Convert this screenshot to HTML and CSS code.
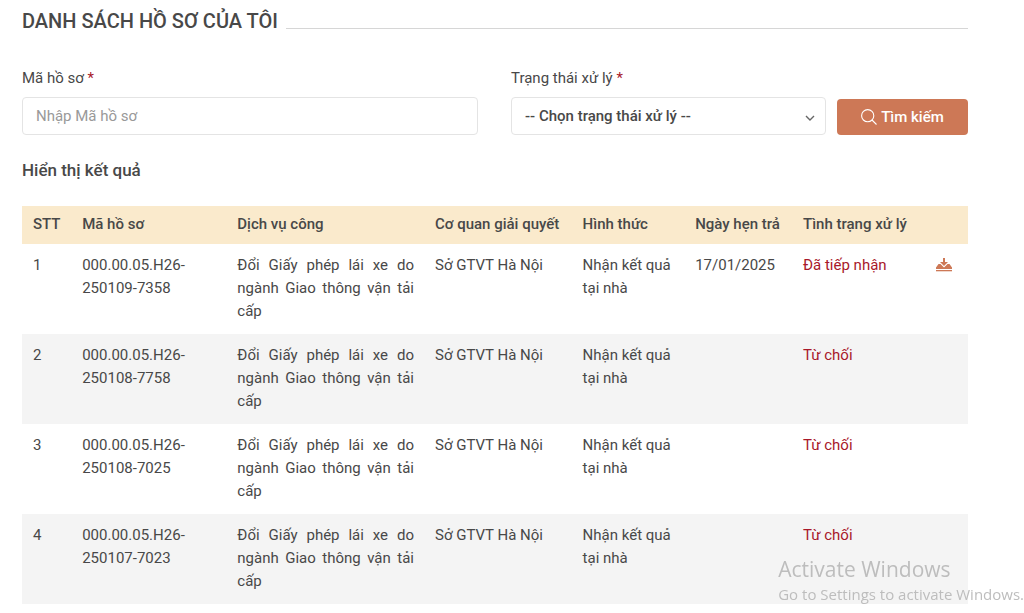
FILE: index.html
```html
<!DOCTYPE html>
<html lang="vi">
<head>
<meta charset="utf-8">
<meta name="viewport" content="width=device-width, initial-scale=1">
<title>Danh sách hồ sơ của tôi</title>
<link rel="stylesheet" href="styles.css">
</head>
<body>
<main class="page">
  <header class="page-head">
    <h1 class="page-title">DANH SÁCH HỒ SƠ CỦA TÔI</h1>
    <span class="page-rule"></span>
  </header>

  <form class="filters">
    <div class="field">
      <label class="field-label" for="code">Mã hồ sơ <span class="required">*</span></label>
      <input class="control" id="code" type="text" placeholder="Nhập Mã hồ sơ">
    </div>
    <div class="field">
      <label class="field-label" for="status">Trạng thái xử lý <span class="required">*</span></label>
      <div class="select-wrap">
        <select class="control control-select" id="status">
          <option>-- Chọn trạng thái xử lý --</option>
        </select>
        <svg class="chevron" viewBox="0 0 10 6" aria-hidden="true"><path d="M1 1l4 4 4-4"/></svg>
      </div>
    </div>
    <button class="search" type="button">
      <svg class="search-icon" viewBox="0 0 16 16" aria-hidden="true"><circle cx="6.7" cy="6.7" r="6.1"/><path d="M11 11l4.5 4.5"/></svg>
      Tìm kiếm
    </button>
  </form>

  <h2 class="results-title">Hiển thị kết quả</h2>

  <table class="results">
    <colgroup>
      <col class="col-index"><col class="col-code"><col class="col-service"><col class="col-agency"><col class="col-method"><col class="col-date"><col class="col-status"><col class="col-action">
    </colgroup>
    <thead>
      <tr><th>STT</th><th>Mã hồ sơ</th><th>Dịch vụ công</th><th>Cơ quan giải quyết</th><th>Hình thức</th><th>Ngày hẹn trả</th><th>Tình trạng xử lý</th><th></th></tr>
    </thead>
    <tbody>
      <tr>
        <td>1</td><td>000.00.05.H26-250109-7358</td><td class="service">Đổi Giấy phép lái xe do ngành Giao thông vận tải cấp</td><td>Sở GTVT Hà Nội</td><td>Nhận kết quả tại nhà</td><td>17/01/2025</td><td class="status">Đã tiếp nhận</td>
        <td class="action"><button class="download" type="button" aria-label="Tải xuống"><svg class="download-icon" viewBox="0 0 16 14" aria-hidden="true"><path d="M7 0h2v4h3L8 8 4 4h3z"/><path d="M0 11V9.5L2.5 6h2L8 9.5 11.5 6h2L16 9.5V11z"/><path d="M0 12h16v1.3H0z"/></svg></button></td>
      </tr>
      <tr>
        <td>2</td><td>000.00.05.H26-250108-7758</td><td class="service">Đổi Giấy phép lái xe do ngành Giao thông vận tải cấp</td><td>Sở GTVT Hà Nội</td><td>Nhận kết quả tại nhà</td><td></td><td class="status">Từ chối</td><td></td>
      </tr>
      <tr>
        <td>3</td><td>000.00.05.H26-250108-7025</td><td class="service">Đổi Giấy phép lái xe do ngành Giao thông vận tải cấp</td><td>Sở GTVT Hà Nội</td><td>Nhận kết quả tại nhà</td><td></td><td class="status">Từ chối</td><td></td>
      </tr>
      <tr>
        <td>4</td><td>000.00.05.H26-250107-7023</td><td class="service">Đổi Giấy phép lái xe do ngành Giao thông vận tải cấp</td><td>Sở GTVT Hà Nội</td><td>Nhận kết quả tại nhà</td><td></td><td class="status">Từ chối</td><td></td>
      </tr>
    </tbody>
  </table>
</main>
<aside class="watermark">
  <p class="watermark-title">Activate Windows</p>
  <p class="watermark-text">Go to Settings to activate Windows.</p>
</aside>
</body>
</html>
```

FILE: styles.css
```css
* {
  box-sizing: border-box;
}

body {
  margin: 0;
  background: #fff;
  color: #484848;
  font: 15px/23px Roboto, "Liberation Sans", sans-serif;
}

.page {
  padding: 9px 56px 8px 22px;
}

.page-head {
  display: flex;
  gap: 8px;
}

.page-title {
  margin: 0;
  font-size: 20px;
  font-weight: 500;
  line-height: 24px;
}

.page-rule {
  flex: 1;
  height: 20px;
  border-bottom: 1px solid #d6d6d6;
}

.filters {
  display: grid;
  grid-template-columns: 478fr 315fr 131fr;
  column-gap: 11px;
  align-items: end;
  margin-top: 34px;
}

.field:first-child {
  margin-right: 22px;
}

.field-label {
  display: block;
  margin-bottom: 7px;
}

.required {
  color: #a8182a;
}

.control {
  display: block;
  width: 100%;
  height: 38px;
  padding: 0 13px;
  border: 1px solid #e4e4e4;
  border-radius: 4px;
  background: #fff;
  color: #484848;
  font: inherit;
}

.control::placeholder {
  color: #999;
  opacity: 1;
}

.select-wrap {
  position: relative;
}

.control-select {
  appearance: none;
  font-weight: 500;
}

.chevron {
  position: absolute;
  top: 18px;
  right: 11px;
  width: 10px;
  height: 6px;
  fill: none;
  stroke: #666;
  stroke-width: 1.4;
  pointer-events: none;
}

.search {
  display: flex;
  align-items: center;
  justify-content: center;
  gap: 4px;
  height: 36px;
  padding: 0;
  border: 0;
  border-radius: 4px;
  background: #cd7856;
  color: #fff;
  font: inherit;
  font-weight: 500;
}

.search-icon {
  width: 16px;
  height: 16px;
  fill: none;
  stroke: #fff;
  stroke-width: 1.1;
}

.results-title {
  margin: 24px 0;
  font-size: 17px;
  font-weight: 500;
  line-height: 23px;
}

.results {
  width: 100%;
  table-layout: fixed;
  border-collapse: collapse;
}

.col-index { width: 5.2%; }
.col-code { width: 16.4%; }
.col-service { width: 20.9%; }
.col-agency { width: 15.6%; }
.col-method { width: 11.9%; }
.col-date { width: 11.4%; }
.col-status { width: 13.6%; }
.col-action { width: 5%; }

.results th {
  padding: 7px 0 8px 11px;
  background: #faeacc;
  font-weight: 500;
  text-align: left;
  white-space: nowrap;
}

.results td {
  padding: 10px 10px 11px 11px;
  vertical-align: top;
}

.results tbody tr:nth-child(even) {
  background: #f4f4f4;
}

.results .service {
  text-align: justify;
}

.results .status {
  color: #a8182a;
}

.results .action {
  padding: 10px 16px 11px 0;
}

.download {
  display: flex;
  align-items: center;
  height: 21px;
  margin-left: auto;
  padding: 0;
  border: 0;
  background: none;
}

.download-icon {
  width: 16px;
  height: 14px;
  fill: #cd7856;
}

.watermark {
  position: fixed;
  right: 0;
  bottom: 7px;
  color: #bdbdbd;
  font-family: "Open Sans", "Noto Sans", sans-serif;
}

.watermark p {
  margin: 0;
}

.watermark-title {
  font-size: 21px;
  line-height: 28px;
}

.watermark-text {
  font-size: 15px;
  line-height: 23px;
}
```
